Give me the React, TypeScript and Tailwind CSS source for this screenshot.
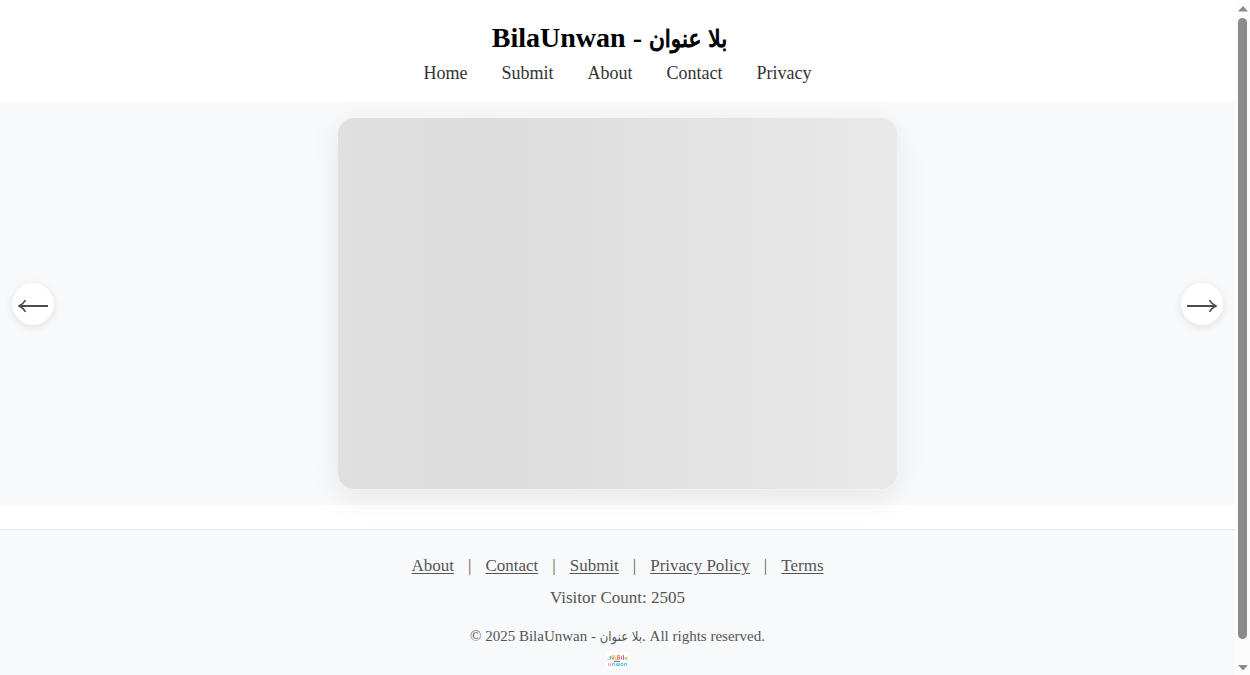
import React from "react";

const navLinks = ["Home", "Submit", "About", "Contact", "Privacy"];
const footerLinks = ["About", "Contact", "Submit", "Privacy Policy", "Terms"];

function ArrowButton({ direction }: { direction: "left" | "right" }) {
  return (
    <button
      type="button"
      aria-label={direction === "left" ? "Previous" : "Next"}
      className="flex size-[42px] shrink-0 items-center justify-center rounded-full bg-white text-[#4b4b4b] shadow-[0_2px_8px_rgba(0,0,0,0.1)]"
    >
      <svg width="30" height="14" viewBox="0 0 30 14" fill="none" stroke="currentColor" className="mt-1">
        {direction === "left" ? (
          <>
            <path strokeWidth="2" d="M30 7H2" />
            <path strokeWidth="1.6" d="M7.500 1.200Q5.500 5 1 7Q5.500 9 7.500 12.800" />
          </>
        ) : (
          <>
            <path strokeWidth="2" d="M0 7H28" />
            <path strokeWidth="1.6" d="M22.500 1.200Q24.500 5 29 7Q24.500 9 22.500 12.800" />
          </>
        )}
      </svg>
    </button>
  );
}

function Logo() {
  return (
    <svg width="23" height="17" viewBox="0 0 23 17" fill="none" role="img" aria-label="Bila Unwan logo" className="mt-0.5">
      <path fill="#fff" d="M0 0h23v17H0z" />
      <path stroke="#f3a0b4" d="M1 7.500h2M2.500 11v2.500h2V11" />
      <path stroke="#c4de6c" strokeWidth="1.5" d="M3 5l2 2M8 3l1 4M19 7h2V5" />
      <path stroke="#58b4e0" d="M4.500 4v4" />
      <path stroke="#8a5fc0" d="M7 5v3" />
      <path stroke="#f2cf52" strokeWidth="1.5" d="M6 3v3M9 7.500h2" />
      <path stroke="#f08a60" d="M11.500 7.500v-4h2v4h-2M11.500 5.500h2" />
      <path stroke="#d25fae" d="M15.500 4.500v3M17.500 3v5" />
      <path stroke="#b448a5" d="M8 9.500h6" />
      <path stroke="#f0a0a0" d="M19 5v2" />
      <path stroke="#5cc6ea" d="M6.500 14v-2.500h2V14M10.500 11v2.500h3V11M12 11v2M15 11.500h2v2h-2v-1M18.500 14v-2.500h2V14" />
    </svg>
  );
}

function Scrollbar() {
  return (
    <div aria-hidden="true" className="sticky top-0 flex h-screen w-[15px] shrink-0 flex-col items-center justify-between bg-[#fcfcfc] pt-1.5 pb-1">
      <svg width="10" height="6" viewBox="0 0 10 6" fill="#8b8b8b"><path d="M0 5.500L5 0l5 5.500z" /></svg>
      <div className="mt-1.5 mb-[26px] w-[9px] flex-1 rounded-full bg-[#8b8b8b]" />
      <svg width="10" height="6" viewBox="0 0 10 6" fill="#8b8b8b"><path d="M0 0L5 5.500L10 0z" /></svg>
    </div>
  );
}

export default function App() {
  return (
    <div className="flex min-h-screen items-start bg-white font-['Georgia','Liberation_Serif','DejaVu_Sans',serif]">
      <div className="flex min-h-screen min-w-0 flex-1 flex-col">
        <header className="flex flex-col items-center pt-5 pb-3">
          <h1 className="pr-4 text-[28px] leading-9 font-bold text-black">
            BilaUnwan - <span lang="ar" className="font-['DejaVu_Sans_Condensed','DejaVu_Sans',sans-serif] text-2xl leading-none font-normal [-webkit-text-stroke:1px_black]">بلا عنوان</span>
          </h1>
          <nav className="flex h-[34px] items-center gap-[34px] text-lg text-[#333]">
            {navLinks.map((label) => (
              <a key={label} href="#">{label}</a>
            ))}
          </nav>
        </header>

        <main className="flex items-center justify-between bg-[#f8f9fb] px-3 py-4">
          <ArrowButton direction="left" />
          <div className="h-[371px] w-full max-w-[559px] rounded-2xl bg-linear-to-r from-[#e0e0e0] via-[#dcdcdc] via-25% to-[#e9e9e9] shadow-[1px_1px_0_#f3f3f3,0_8px_32px_rgba(0,0,0,0.08)]" />
          <ArrowButton direction="right" />
        </main>

        <footer className="mt-6 flex flex-1 flex-col items-center border-t border-[#e5e7eb] bg-[#f8f9fb] pt-5 text-[17px] text-[#555]">
          <nav className="flex h-8 items-center gap-[14px]">
            {footerLinks.map((label, i) => (
              <React.Fragment key={label}>
                {i > 0 && <span>|</span>}
                <a href="#" className="underline underline-offset-2">{label}</a>
              </React.Fragment>
            ))}
          </nav>
          <p className="leading-8">Visitor Count: 2505</p>
          <p className="mt-2 text-[15px] leading-7">
            © 2025 BilaUnwan - <span lang="ar" className="font-['DejaVu_Sans_Condensed','DejaVu_Sans',sans-serif] text-[13px] leading-none">بلا عنوان</span>. All rights reserved.
          </p>
          <Logo />
        </footer>
      </div>
      <Scrollbar />
    </div>
  );
}
